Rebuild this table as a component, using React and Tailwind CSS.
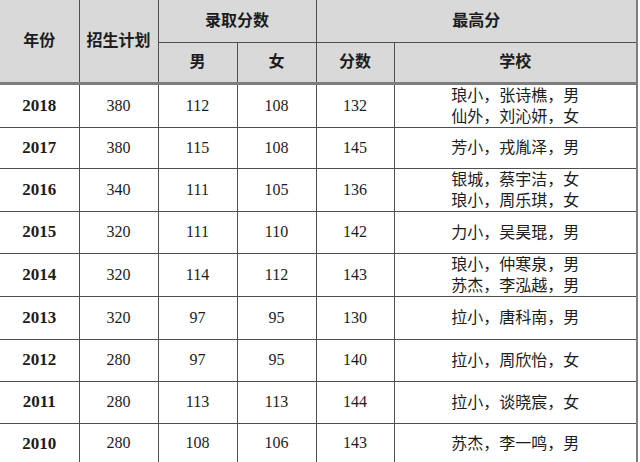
import React from 'react';

const rows = [
  { year: '2018', plan: '380', male: '112', female: '108', top: '132', school: ['琅小，张诗樵，男', '仙外，刘沁妍，女'], h: 'h-[41px]' },
  { year: '2017', plan: '380', male: '115', female: '108', top: '145', school: ['芳小，戎胤泽，男'], h: 'h-[41px]' },
  { year: '2016', plan: '340', male: '111', female: '105', top: '136', school: ['银城，蔡宇洁，女', '琅小，周乐琪，女'], h: 'h-[42px]' },
  { year: '2015', plan: '320', male: '111', female: '110', top: '142', school: ['力小，吴昊琨，男'], h: 'h-[42px]' },
  { year: '2014', plan: '320', male: '114', female: '112', top: '143', school: ['琅小，仲寒泉，男', '苏杰，李泓越，男'], h: 'h-[41px]' },
  { year: '2013', plan: '320', male: '97', female: '95', top: '130', school: ['拉小，唐科南，男'], h: 'h-[43px]' },
  { year: '2012', plan: '280', male: '97', female: '95', top: '140', school: ['拉小，周欣怡，女'], h: 'h-[42px]' },
  { year: '2011', plan: '280', male: '113', female: '113', top: '144', school: ['拉小，谈晓宸，女'], h: 'h-[42px]' },
  { year: '2010', plan: '280', male: '108', female: '106', top: '143', school: ['苏杰，李一鸣，男'], h: 'h-[41px]' },
];

const cell = 'border border-[#4f4f4f] text-center align-middle p-0';
const head = cell + ' bg-[#d9d9d9] font-bold';

export default function App() {
  return (
    <div className="w-[640px] h-[462px] bg-white overflow-hidden text-[#1c1c1c] font-['Liberation_Serif','Noto_Sans_CJK_SC',serif] text-[16px]">
      <table className="w-[638px] table-fixed border-collapse">
        <colgroup>
          <col className="w-[79px]" />
          <col className="w-[79px]" />
          <col className="w-[79px]" />
          <col className="w-[79px]" />
          <col className="w-[78px]" />
          <col />
        </colgroup>
        <thead>
          <tr className="h-[42px]">
            <th rowSpan={2} className={head + ' border-t-0 border-l-0 border-b-[3px] border-b-[#7d7d7d]'}>年份</th>
            <th rowSpan={2} className={head + ' border-t-0 border-b-[3px] border-b-[#7d7d7d]'}>招生计划</th>
            <th colSpan={2} className={head + ' border-t-0'}>录取分数</th>
            <th colSpan={2} className={head + ' border-t-0 border-r-2 border-r-[#7d7d7d]'}>最高分</th>
          </tr>
          <tr className="h-[41px]">
            <th className={head + ' border-b-[3px] border-b-[#7d7d7d]'}>男</th>
            <th className={head + ' border-b-[3px] border-b-[#7d7d7d]'}>女</th>
            <th className={head + ' border-b-[3px] border-b-[#7d7d7d]'}>分数</th>
            <th className={head + ' border-b-[3px] border-b-[#7d7d7d] border-r-2 border-r-[#7d7d7d]'}>学校</th>
          </tr>
        </thead>
        <tbody>
          {rows.map((r, i) => {
            const last = i === rows.length - 1 ? ' border-b-2 border-b-[#7d7d7d]' : '';
            return (
              <tr key={r.year} className={r.h}>
                <td className={cell + ' border-l-0 font-bold text-[17px]' + last}>{r.year}</td>
                <td className={cell + last}>{r.plan}</td>
                <td className={cell + last}>{r.male}</td>
                <td className={cell + last}>{r.female}</td>
                <td className={cell + last}>{r.top}</td>
                <td className={cell + ' border-r-2 border-r-[#7d7d7d] leading-[21px]' + last}>
                  {r.school.map((s) => (
                    <div key={s}>{s}</div>
                  ))}
                </td>
              </tr>
            );
          })}
        </tbody>
      </table>
    </div>
  );
}
